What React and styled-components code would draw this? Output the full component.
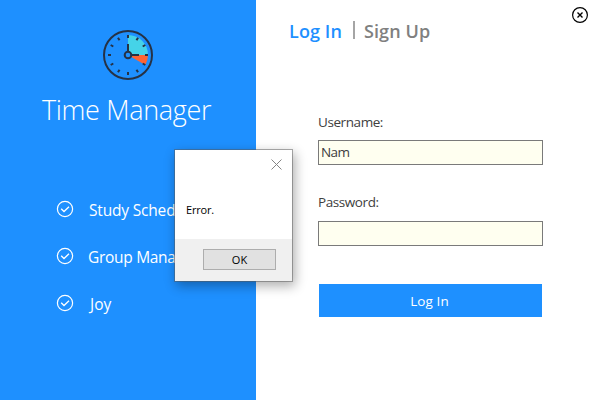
import React from "react";
import styled, { createGlobalStyle } from "styled-components";

const GlobalStyle = createGlobalStyle`
  *, *::before, *::after { box-sizing: border-box; }
  body { margin: 0; font-family: "Open Sans", "Noto Sans", sans-serif; overflow: hidden; }
  button, input { font-family: inherit; border-radius: 0; margin: 0; }
`;

const Window = styled.div`
  position: relative;
  display: flex;
  width: 600px;
  height: 400px;
  background: #fff;
`;

const Sidebar = styled.aside`
  width: 256px;
  height: 400px;
  padding-top: 29px;
  background: #1e90ff;
  color: #fff;
`;

const ClockIcon = styled.svg`
  display: block;
  width: 52px;
  height: 52px;
  margin-left: 102px;
`;

const Title = styled.h1`
  margin: 9px 0 0 42px;
  font-size: 27px;
  line-height: 40px;
  font-weight: 300;
  letter-spacing: -0.33px;
  white-space: nowrap;
`;

const Features = styled.ul`
  list-style: none;
  margin: 69px 0 0;
  padding: 0 0 0 56px;
`;

const Feature = styled.li`
  display: flex;
  align-items: center;
  height: 22px;
  margin-bottom: 25px;
  font-size: 15.5px;
  line-height: 22px;
  white-space: nowrap;
`;

const CheckIcon = styled.svg`
  width: 18px;
  height: 18px;
  flex: none;
  margin: -2px 14px 0 0;
`;

const FeatureLabel = styled.span`
  margin-left: ${(p) => p.$offset || 0}px;
  letter-spacing: ${(p) => p.$spacing || 0}px;
`;

const Main = styled.main`
  flex: 1;
  display: flex;
  flex-direction: column;
`;

const Header = styled.header`
  display: flex;
  height: 64px;
  padding: 19px 11px 0 33px;
`;

const Tab = styled.span`
  font-size: 18px;
  font-weight: 600;
  line-height: 25px;
  letter-spacing: 0.1px;
  color: ${(p) => (p.$active ? "#1e90ff" : "#808080")};
  white-space: nowrap;
  width: ${(p) => p.$width}px;
`;

const Divider = styled.span`
  width: 2px;
  height: 18px;
  margin: 2px 9px 0 10px;
  background: #a5a5a5;
`;

const CloseIcon = styled.svg`
  width: 18px;
  height: 18px;
  margin: -13px 0 0 auto;
`;

const Form = styled.div`
  display: flex;
  flex-direction: column;
  margin: 48px 0 0 62px;
  width: 225px;
`;

const Label = styled.label`
  font-size: 13.5px;
  line-height: 20px;
  letter-spacing: -0.42px;
  color: #404040;
`;

const Input = styled.input`
  height: 25px;
  margin: ${(p) => p.$margin};
  padding: 0 2px 1px;
  border: 1px solid #7a7a7a;
  background: #fffff0;
  color: #404040;
  font-size: 13.5px;
  letter-spacing: -0.6px;
  outline: none;
`;

const Submit = styled.button`
  height: 33px;
  margin: 38px 1px 0;
  padding: 0 2px 0 0;
  border: 0;
  background: #1e90ff;
  color: #fff;
  font-size: 13.5px;
  letter-spacing: 0.1px;
`;

const Dialog = styled.div`
  position: absolute;
  left: 174px;
  top: 149px;
  width: 119px;
  height: 133px;
  display: flex;
  flex-direction: column;
  border: 1px solid rgba(90, 90, 90, 0.5);
  background: #fff;
  background-clip: padding-box;
  box-shadow: 2px 4px 11px rgba(0, 0, 0, 0.32);
  font-size: 11px;
  color: #000;
`;

const DialogBody = styled.div`
  display: flex;
  flex-direction: column;
  height: 89px;
`;

const DialogClose = styled.svg`
  align-self: flex-end;
  width: 11px;
  height: 11px;
  margin: 9px 10px 0 0;
`;

const Message = styled.p`
  margin: 32px 0 0 11px;
  line-height: 16px;
  letter-spacing: -0.2px;
`;

const DialogFooter = styled.div`
  flex: 1;
  display: flex;
  justify-content: flex-end;
  padding: 10px 16px 0 0;
  background: #f0f0f0;
`;

const OkButton = styled.button`
  width: 73px;
  height: 21px;
  padding: 0;
  border: 1px solid #adadad;
  background: #e1e1e1;
  color: #000;
  font-size: 11px;
  line-height: 19px;
`;

const hours = [0, 30, 60, 90, 120, 150, 180, 210, 240, 270, 300, 330];

function Clock() {
  return (
    <ClockIcon viewBox="-26 -26 52 52">
      <path d="M0 0V-20A20 20 0 0 1 20 0Z" fill="#45d3e8" />
      <path d="M0 0H20A20 20 0 0 1 17.3 10Z" fill="#ff6433" />
      <g fill="none" stroke="#263245" strokeWidth="2">
        <circle r="24" />
        {hours.map((a) => (
          <path key={a} d="M0 -20V-17" transform={`rotate(${a})`} />
        ))}
        <path d="M0 -11V-4M4 0H11" />
        <circle r="3.3" fill="#1e90ff" />
      </g>
    </ClockIcon>
  );
}

function Check() {
  return (
    <CheckIcon viewBox="0 0 18 18" fill="none" stroke="#fff">
      <circle cx="9" cy="9" r="7.6" strokeWidth="1.2" />
      <path d="M5.2 8.8L8 11.5L13 6.7" strokeWidth="1.3" />
    </CheckIcon>
  );
}

export default function App() {
  return (
    <>
      <GlobalStyle />
      <Window>
        <Sidebar>
          <Clock />
          <Title>Time Manager</Title>
          <Features>
            <Feature><Check /><FeatureLabel $offset={1} $spacing={-0.18}>Study Sched</FeatureLabel></Feature>
            <Feature><Check /><FeatureLabel $spacing={-0.3}>Group Mana</FeatureLabel></Feature>
            <Feature><Check /><FeatureLabel $offset={2}>Joy</FeatureLabel></Feature>
          </Features>
        </Sidebar>
        <Main>
          <Header>
            <Tab $active $width={54}>Log In</Tab>
            <Divider />
            <Tab $width={70}>Sign Up</Tab>
            <CloseIcon viewBox="0 0 18 18" fill="none" stroke="#000">
              <circle cx="9" cy="9" r="7.4" strokeWidth="1.2" />
              <path d="M6.5 6.5L11.5 11.5M11.5 6.5L6.5 11.5" strokeWidth="1.4" />
            </CloseIcon>
          </Header>
          <Form>
            <Label htmlFor="username">Username:</Label>
            <Input id="username" defaultValue="Nam" $margin="8px 0 27px" />
            <Label htmlFor="password">Password:</Label>
            <Input id="password" type="password" $margin="9px 0 0" />
            <Submit>Log In</Submit>
          </Form>
        </Main>
        <Dialog role="dialog">
          <DialogBody>
            <DialogClose viewBox="0 0 11 11" stroke="#858585">
              <path d="M0.5 0.5L10.5 10.5M10.5 0.5L0.5 10.5" />
            </DialogClose>
            <Message>Error.</Message>
          </DialogBody>
          <DialogFooter><OkButton>OK</OkButton></DialogFooter>
        </Dialog>
      </Window>
    </>
  );
}
